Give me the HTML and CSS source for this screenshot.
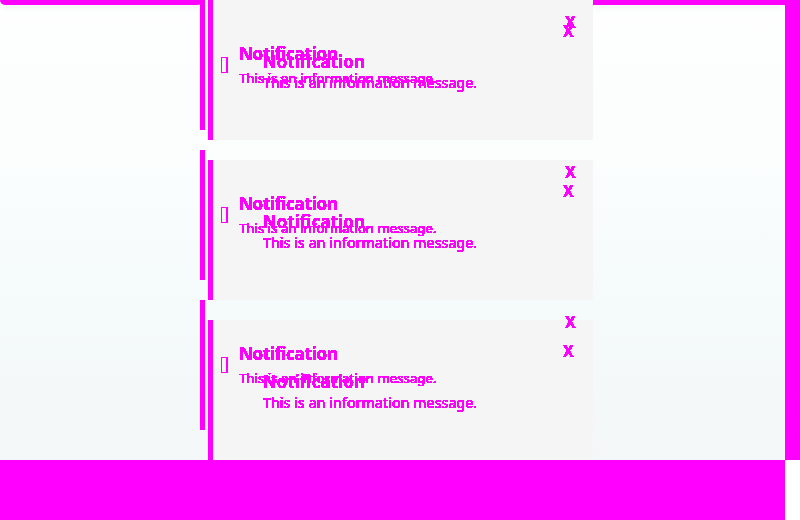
FILE: index.html
```html
<!DOCTYPE html>
<html lang="en">
<head>
<meta charset="utf-8">
<title>Notifications</title>
<link rel="stylesheet" href="styles.css">
</head>
<body>
<svg class="defs" width="0" height="0" aria-hidden="true"><filter id="crisp" color-interpolation-filters="sRGB"><feComponentTransfer><feFuncA type="discrete" tableValues="0 1 1 1 1 1 1 1"/></feComponentTransfer></filter></svg>
<div class="screen">
  <main class="canvas">
    <div class="edge"><i class="edge-left"></i><i class="edge-right"></i></div>
    <section class="stack stack-back">
      <article class="card"><b class="close">X</b><h2>Notification</h2><p>This is an information message.</p></article>
      <article class="card"><b class="close">X</b><h2>Notification</h2><p>This is an information message.</p></article>
      <article class="card"><b class="close">X</b><h2>Notification</h2><p>This is an information message.</p></article>
    </section>
    <section class="stack stack-front">
      <article class="note"><i class="icon"></i><b class="close">X</b><h2>Notification</h2><p>This is an information message.</p></article>
      <article class="note"><i class="icon"></i><b class="close">X</b><h2>Notification</h2><p>This is an information message.</p></article>
      <article class="note"><i class="icon"></i><b class="close">X</b><h2>Notification</h2><p>This is an information message.</p></article>
    </section>
  </main>
  <aside class="side"></aside>
  <footer class="bottom"></footer>
</div>
</body>
</html>
```
FILE: styles.css
```css
* { box-sizing: border-box; }
body { margin: 0; width: 800px; height: 520px; overflow: hidden; background: #fff; font-family: "Noto Sans", sans-serif; color: #f0f; }
.defs { position: absolute; }
.screen { display: grid; grid-template-columns: 785px 15px; grid-template-rows: 460px 60px; }
.side, .bottom { background: #f0f; }
.canvas { position: relative; overflow: hidden; background: linear-gradient(#fefefe 0, #fbfefd 140px, #f5fafb 300px, #f3f7f8 460px); }
.edge { display: flex; justify-content: space-between; height: 5px; }
.edge i { background: #f0f; box-shadow: 0 1px 8px #e8efed; }
.edge-left { width: 203px; border-radius: 0 0 5px 5px; }
.edge-right { width: 192px; }
.stack { position: absolute; top: 0; display: flex; flex-direction: column; gap: 20px; }
.stack-back { left: 208px; width: 385px; }
.card { position: relative; height: 140px; padding: 51px 0 0 50px; background: #f5f5f5; border-left: 5px solid #f0f; }
.stack-front { left: 200px; width: 393px; }
.note { position: relative; height: 130px; padding: 43px 0 0 34px; border-left: 5px solid #f0f; }
h2, p { margin: 0; white-space: nowrap; width: max-content; filter: url(#crisp); }
.card h2 { font-size: 17px; line-height: 22px; font-weight: 600; letter-spacing: .32px; -webkit-text-stroke: .2px #f0f; }
.card p { font-size: 14px; line-height: 20px; letter-spacing: .18px; -webkit-text-stroke: .15px #f0f; }
.note h2 { font-size: 17px; line-height: 22px; font-weight: 700; letter-spacing: -.25px; }
.note p { margin-top: 3px; font-size: 13px; line-height: 20px; letter-spacing: .12px; -webkit-text-stroke: .2px #f0f; }
.icon { position: absolute; left: 16px; top: 57px; width: 7px; height: 16px; border: 1px solid #f0f; border-right-width: 2px; background: #f5f5f5; }
.close { position: absolute; font-size: 16px; line-height: 20px; filter: url(#crisp); }
.card .close { left: 350px; top: 21px; }
.note .close { left: 360px; top: 12px; }
```
